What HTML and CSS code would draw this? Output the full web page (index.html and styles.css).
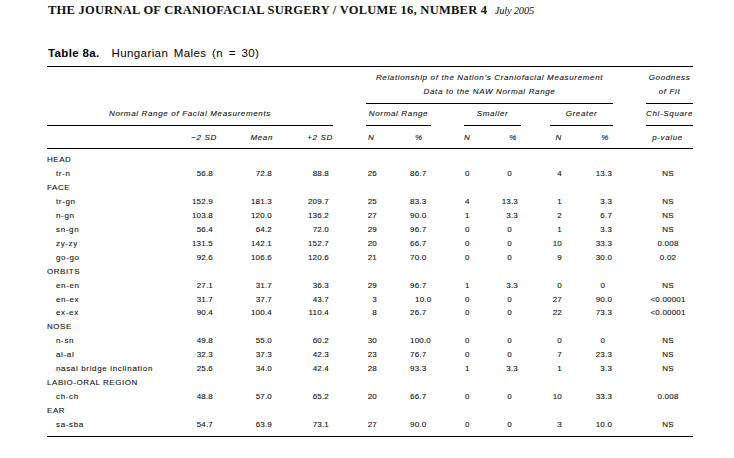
FILE: index.html
```html
<!DOCTYPE html>
<html lang="en">
<head>
<meta charset="utf-8">
<title>Table 8a</title>
<link rel="stylesheet" href="styles.css">
</head>
<body>
<div class="page">
  <div class="journal">THE JOURNAL OF CRANIOFACIAL SURGERY / VOLUME 16, NUMBER 4 <em>July 2005</em></div>
  <div class="caption"><b>Table 8a.</b><span class="ctext">Hungarian Males (n = 30)</span></div>
  <table class="data">
    <colgroup>
      <col class="w-label"><col class="w-sd1"><col class="w-mean"><col class="w-sd2"><col class="w-gapa">
      <col class="w-n"><col class="w-pct"><col class="w-gapb"><col class="w-smn"><col class="w-smp">
      <col class="w-gapc"><col class="w-grn"><col class="w-grp"><col class="w-gapd"><col class="w-chi">
    </colgroup>
    <thead>
      <tr class="h1">
        <td colspan="4"></td><td></td>
        <td colspan="8" class="hd rule">Relationship of the Nation’s Craniofacial Measurement<br>Data to the NAW Normal Range</td>
        <td></td>
        <td class="hd rule">Goodness<br>of Fit</td>
      </tr>
      <tr class="h2">
        <td colspan="4" class="hd rule">Normal Range of Facial Measurements</td><td></td>
        <td colspan="2" class="hd rule">Normal Range</td><td></td>
        <td colspan="2" class="hd rule">Smaller</td><td></td>
        <td colspan="2" class="hd rule">Greater</td><td></td>
        <td class="hd rule">Chi-Square</td>
      </tr>
      <tr class="h3">
        <td></td>
        <td class="hr sd1">−2 SD</td>
        <td class="hr mean">Mean</td>
        <td class="hr sd2">+2 SD</td>
        <td></td>
        <td class="hl hn">N</td>
        <td class="hl hp">%</td>
        <td></td>
        <td class="hl hsn">N</td>
        <td class="hr hsp">%</td>
        <td></td>
        <td class="hr hgn">N</td>
        <td class="hr hgp">%</td>
        <td></td>
        <td class="hd chi">p-value</td>
      </tr>
    </thead>
    <tbody>
      <tr class="sec"><td colspan="15">HEAD</td></tr>
      <tr><td class="lab">tr-n</td><td class="v sd1">56.8</td><td class="v mean">72.8</td><td class="v sd2">88.8</td><td></td><td class="v n">26</td><td class="v pct">86.7</td><td></td><td class="v smn">0</td><td class="v smp z">0</td><td></td><td class="v grn">4</td><td class="v grp">13.3</td><td></td><td class="v chi">NS</td></tr>
      <tr class="sec"><td colspan="15">FACE</td></tr>
      <tr><td class="lab">tr-gn</td><td class="v sd1">152.9</td><td class="v mean">181.3</td><td class="v sd2">209.7</td><td></td><td class="v n">25</td><td class="v pct">83.3</td><td></td><td class="v smn">4</td><td class="v smp">13.3</td><td></td><td class="v grn">1</td><td class="v grp">3.3</td><td></td><td class="v chi">NS</td></tr>
      <tr><td class="lab">n-gn</td><td class="v sd1">103.8</td><td class="v mean">120.0</td><td class="v sd2">136.2</td><td></td><td class="v n">27</td><td class="v pct">90.0</td><td></td><td class="v smn">1</td><td class="v smp">3.3</td><td></td><td class="v grn">2</td><td class="v grp">6.7</td><td></td><td class="v chi">NS</td></tr>
      <tr><td class="lab">sn-gn</td><td class="v sd1">56.4</td><td class="v mean">64.2</td><td class="v sd2">72.0</td><td></td><td class="v n">29</td><td class="v pct">96.7</td><td></td><td class="v smn">0</td><td class="v smp z">0</td><td></td><td class="v grn">1</td><td class="v grp">3.3</td><td></td><td class="v chi">NS</td></tr>
      <tr><td class="lab">zy-zy</td><td class="v sd1">131.5</td><td class="v mean">142.1</td><td class="v sd2">152.7</td><td></td><td class="v n">20</td><td class="v pct">66.7</td><td></td><td class="v smn">0</td><td class="v smp z">0</td><td></td><td class="v grn">10</td><td class="v grp">33.3</td><td></td><td class="v chi">0.008</td></tr>
      <tr><td class="lab">go-go</td><td class="v sd1">92.6</td><td class="v mean">106.6</td><td class="v sd2">120.6</td><td></td><td class="v n">21</td><td class="v pct">70.0</td><td></td><td class="v smn">0</td><td class="v smp z">0</td><td></td><td class="v grn">9</td><td class="v grp">30.0</td><td></td><td class="v chi">0.02</td></tr>
      <tr class="sec"><td colspan="15">ORBITS</td></tr>
      <tr><td class="lab">en-en</td><td class="v sd1">27.1</td><td class="v mean">31.7</td><td class="v sd2">36.3</td><td></td><td class="v n">29</td><td class="v pct">96.7</td><td></td><td class="v smn">1</td><td class="v smp">3.3</td><td></td><td class="v grn">0</td><td class="v grp z">0</td><td></td><td class="v chi">NS</td></tr>
      <tr><td class="lab">en-ex</td><td class="v sd1">31.7</td><td class="v mean">37.7</td><td class="v sd2">43.7</td><td></td><td class="v n">3</td><td class="v pct sh">10.0</td><td></td><td class="v smn">0</td><td class="v smp z">0</td><td></td><td class="v grn">27</td><td class="v grp">90.0</td><td></td><td class="v chi">&lt;0.00001</td></tr>
      <tr><td class="lab">ex-ex</td><td class="v sd1">90.4</td><td class="v mean">100.4</td><td class="v sd2">110.4</td><td></td><td class="v n">8</td><td class="v pct">26.7</td><td></td><td class="v smn">0</td><td class="v smp z">0</td><td></td><td class="v grn">22</td><td class="v grp">73.3</td><td></td><td class="v chi">&lt;0.00001</td></tr>
      <tr class="sec"><td colspan="15">NOSE</td></tr>
      <tr><td class="lab">n-sn</td><td class="v sd1">49.8</td><td class="v mean">55.0</td><td class="v sd2">60.2</td><td></td><td class="v n">30</td><td class="v pct">100.0</td><td></td><td class="v smn">0</td><td class="v smp z">0</td><td></td><td class="v grn">0</td><td class="v grp z">0</td><td></td><td class="v chi">NS</td></tr>
      <tr><td class="lab">al-al</td><td class="v sd1">32.3</td><td class="v mean">37.3</td><td class="v sd2">42.3</td><td></td><td class="v n">23</td><td class="v pct">76.7</td><td></td><td class="v smn">0</td><td class="v smp z">0</td><td></td><td class="v grn">7</td><td class="v grp">23.3</td><td></td><td class="v chi">NS</td></tr>
      <tr><td class="lab">nasal bridge inclination</td><td class="v sd1">25.6</td><td class="v mean">34.0</td><td class="v sd2">42.4</td><td></td><td class="v n">28</td><td class="v pct">93.3</td><td></td><td class="v smn">1</td><td class="v smp">3.3</td><td></td><td class="v grn">1</td><td class="v grp">3.3</td><td></td><td class="v chi">NS</td></tr>
      <tr class="sec"><td colspan="15">LABIO-ORAL REGION</td></tr>
      <tr><td class="lab">ch-ch</td><td class="v sd1">48.8</td><td class="v mean">57.0</td><td class="v sd2">65.2</td><td></td><td class="v n">20</td><td class="v pct">66.7</td><td></td><td class="v smn">0</td><td class="v smp z">0</td><td></td><td class="v grn">10</td><td class="v grp">33.3</td><td></td><td class="v chi">0.008</td></tr>
      <tr class="sec"><td colspan="15">EAR</td></tr>
      <tr><td class="lab">sa-sba</td><td class="v sd1">54.7</td><td class="v mean">63.9</td><td class="v sd2">73.1</td><td></td><td class="v n">27</td><td class="v pct">90.0</td><td></td><td class="v smn">0</td><td class="v smp z">0</td><td></td><td class="v grn">3</td><td class="v grp">10.0</td><td></td><td class="v chi">NS</td></tr>
    </tbody>
  </table>
</div>
</body>
</html>
```

FILE: styles.css
```css
html, body {
  margin: 0;
  padding: 0;
  background: #ffffff;
}

body {
  color: #111111;
  font-family: "Liberation Sans", Arial, sans-serif;
}

.page {
  padding: 2px 0 0 47px;
}

.journal {
  padding-left: 1px;
  font-family: "Liberation Serif", "Times New Roman", serif;
  font-weight: bold;
  font-size: 12.5px;
  line-height: 16px;
  letter-spacing: 0.25px;
  white-space: nowrap;
  color: #111;
}

.journal em {
  font-weight: normal;
  font-style: italic;
  font-size: 10.5px;
  letter-spacing: -0.2px;
  margin-left: 4px;
}

.caption {
  margin-top: 27px;
  padding-left: 1px;
  font-size: 11.5px;
  line-height: 14px;
  letter-spacing: 0.35px;
  white-space: nowrap;
  color: #000;
}

.caption b {
  font-weight: bold;
}

.caption .ctext {
  margin-left: 12px;
  word-spacing: 2px;
  letter-spacing: 0.4px;
}

.data {
  margin-top: 6px;
  width: 646px;
  table-layout: fixed;
  border-collapse: separate;
  border-spacing: 0;
  border-top: 1px solid #000;
  border-bottom: 1px solid #000;
  font-size: 8px;
  -webkit-text-stroke: 0.1px currentColor;
}

.w-label { width: 113px; }
.w-sd1 { width: 57px; }
.w-mean { width: 56px; }
.w-sd2 { width: 60px; }
.w-gapa { width: 33px; }
.w-n { width: 12px; }
.w-pct { width: 53px; }
.w-gapb { width: 33px; }
.w-smn { width: 26px; }
.w-smp { width: 31px; }
.w-gapc { width: 29px; }
.w-grn { width: 13px; }
.w-grp { width: 50px; }
.w-gapd { width: 33px; }
.w-chi { width: 47px; }

.data td {
  padding: 0;
  line-height: 14px;
  vertical-align: top;
  white-space: nowrap;
}

.data thead td {
  font-style: italic;
  letter-spacing: 0.65px;
}

.data .rule {
  border-bottom: 1px solid #000;
}

.data .hd {
  text-align: center;
}

.data .h1 td {
  padding-top: 4px;
  padding-bottom: 4px;
}

.data .h2 td {
  padding-top: 3px;
  padding-bottom: 4px;
}

.data .h3 td {
  padding-top: 4.5px;
  padding-bottom: 3.5px;
  border-bottom: 1px solid #000;
}

.data .hr { text-align: right; }
.data .hl { text-align: left; }

.data .h3 .sd1 { padding-right: 0; }
.data .h3 .mean { padding-right: 0; }
.data .h3 .sd2 { padding-right: 0; }
.data .hn { padding-left: 2px; }
.data .hp { padding-left: 37px; }
.data .hsn { padding-left: 0; }
.data .hsp { padding-right: 4px; }
.data .hgn { padding-right: 1px; }
.data .hgp { padding-right: 4px; }
.data .h3 .chi { padding-right: 4px; }

.data tbody td {
  line-height: 13.95px;
}

.data tbody tr:first-child td {
  padding-top: 4px;
}

.data tbody tr:last-child td {
  padding-bottom: 4px;
}

.data .sec td {
  letter-spacing: 0.55px;
}

.data .lab {
  padding-left: 9px;
  letter-spacing: 0.65px;
}

.data .v {
  letter-spacing: 0.2px;
  text-align: right;
}

.data .sd1 { padding-right: 4px; }
.data .mean { padding-right: 1px; }
.data .sd2 { padding-right: 4px; }
.data .n { padding-right: 1px; }
.data .v.pct { text-align: left; padding-left: 32px; }
.data .v.pct.sh { padding-left: 37px; }
.data .v.smn { text-align: left; padding-left: 1px; }
.data .smp { padding-right: 3px; }
.data .smp.z { padding-right: 9px; }
.data .grn { padding-right: 1px; }
.data .grp { padding-right: 1px; }
.data .grp.z { padding-right: 8px; }
.data .v.chi { text-align: center; padding-right: 3px; }
```
